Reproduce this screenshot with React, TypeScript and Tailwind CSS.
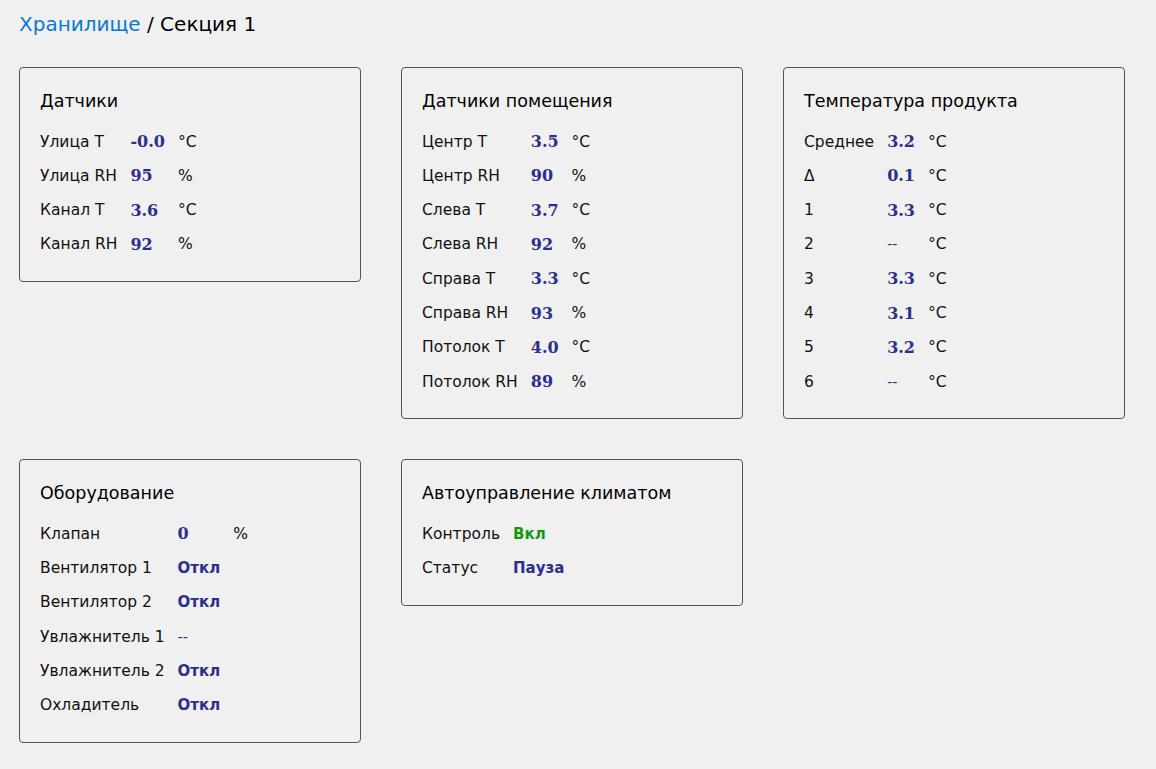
import React from 'react'

type Row = { label: string; value: string; unit?: string; kind?: 'num' | 'text' | 'none' | 'on' }

const SENSORS: Row[] = [
  { label: 'Улица T', value: '-0.0', unit: '°C' },
  { label: 'Улица RH', value: '95', unit: '%' },
  { label: 'Канал T', value: '3.6', unit: '°C' },
  { label: 'Канал RH', value: '92', unit: '%' },
]

const ROOM: Row[] = [
  { label: 'Центр T', value: '3.5', unit: '°C' },
  { label: 'Центр RH', value: '90', unit: '%' },
  { label: 'Слева T', value: '3.7', unit: '°C' },
  { label: 'Слева RH', value: '92', unit: '%' },
  { label: 'Справа T', value: '3.3', unit: '°C' },
  { label: 'Справа RH', value: '93', unit: '%' },
  { label: 'Потолок T', value: '4.0', unit: '°C' },
  { label: 'Потолок RH', value: '89', unit: '%' },
]

const PRODUCT: Row[] = [
  { label: 'Среднее', value: '3.2', unit: '°C' },
  { label: 'Δ', value: '0.1', unit: '°C' },
  { label: '1', value: '3.3', unit: '°C' },
  { label: '2', value: '--', unit: '°C', kind: 'none' },
  { label: '3', value: '3.3', unit: '°C' },
  { label: '4', value: '3.1', unit: '°C' },
  { label: '5', value: '3.2', unit: '°C' },
  { label: '6', value: '--', unit: '°C', kind: 'none' },
]

const EQUIPMENT: Row[] = [
  { label: 'Клапан', value: '0', unit: '%' },
  { label: 'Вентилятор 1', value: 'Откл', kind: 'text' },
  { label: 'Вентилятор 2', value: 'Откл', kind: 'text' },
  { label: 'Увлажнитель 1', value: '--', kind: 'none' },
  { label: 'Увлажнитель 2', value: 'Откл', kind: 'text' },
  { label: 'Охладитель', value: 'Откл', kind: 'text' },
]

const CLIMATE: Row[] = [
  { label: 'Контроль', value: 'Вкл', kind: 'on' },
  { label: 'Статус', value: 'Пауза', kind: 'text' },
]

function Value({ row }: { row: Row }) {
  const kind = row.kind ?? 'num'
  if (kind === 'none')
    return <span className="font-['DejaVu_Serif',serif] text-[15px] text-[#2b2f8c]">{row.value}</span>
  if (kind === 'text')
    return <span className="font-bold text-[15px] text-[#2b2f8c]">{row.value}</span>
  if (kind === 'on')
    return <span className="font-bold text-[15px] text-[#0e9a0e]">{row.value}</span>
  return <span className="font-['DejaVu_Serif',serif] font-bold text-[16px] text-[#2b2f8c]">{row.value}</span>
}

function Card({ title, rows }: { title: string; rows: Row[] }) {
  return (
    <div className="rounded-[4px] border border-[#555] px-5 pt-5 pb-[19px]">
      <h2 className="text-[17.5px] leading-[26px] mb-[11px] text-black">{title}</h2>
      <table className="border-collapse">
        <tbody>
          {rows.map(r => (
            <tr key={r.label} className="h-[34.3px]">
              <td className="pr-[13px] whitespace-nowrap align-middle">{r.label}</td>
              <td className="pr-[13px] whitespace-nowrap align-middle">
                <Value row={r} />
              </td>
              <td className="whitespace-nowrap align-middle">{r.unit ?? ''}</td>
            </tr>
          ))}
        </tbody>
      </table>
    </div>
  )
}

export default function App() {
  return (
    <main className="min-h-screen bg-[#f0f0f0] text-[#111] font-['DejaVu_Sans',sans-serif] text-[15.5px] px-[19px] pt-[10px] pb-6">
      {/* Breadcrumb */}
      <div className="text-[20px] leading-[28px] mb-[29px]">
        <a href="#" className="text-[#0a78d0]">Хранилище</a>
        <span className="text-black"> / Секция 1</span>
      </div>

      <div className="grid grid-cols-[342px_342px_342px] gap-x-[40px] gap-y-[40px] items-start">
        <Card title="Датчики" rows={SENSORS} />
        <Card title="Датчики помещения" rows={ROOM} />
        <Card title="Температура продукта" rows={PRODUCT} />
        <Card title="Оборудование" rows={EQUIPMENT} />
        <Card title="Автоуправление климатом" rows={CLIMATE} />
      </div>
    </main>
  )
}
